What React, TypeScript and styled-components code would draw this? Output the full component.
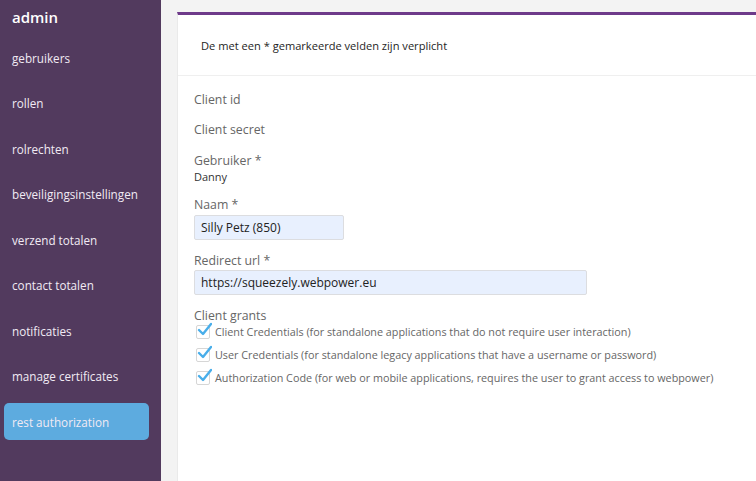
import styled, { createGlobalStyle } from "styled-components";

const GlobalStyle = createGlobalStyle`
  html, body {
    margin: 0;
    padding: 0;
    height: 100%;
    background: #f3f3f3;
    font-family: "Open Sans", "Liberation Sans", sans-serif;
  }
`;

const Layout = styled.div`
  display: flex;
  height: 481px;
  overflow: hidden;
`;

const Sidebar = styled.nav`
  width: 161px;
  flex-shrink: 0;
  background-color: #523a5e;
  display: flex;
  flex-direction: column;
`;

const Brand = styled.div`
  color: #ffffff;
  font-size: 15px;
  font-weight: 600;
  padding: 6px 12px 0;
  height: 33px;
  line-height: 22px;
`;

const NavItem = styled.a<{ $active?: boolean }>`
  display: flex;
  align-items: center;
  margin: 0 12px 0 4px;
  padding: 0 8px;
  height: 37px;
  margin-bottom: 8.5px;
  border-radius: 5px;
  font-size: 11.7px;
  color: #f1eaf4;
  text-decoration: none;
  background: ${(p) => (p.$active ? "#5dabdf" : "transparent")};
`;

const Main = styled.main`
  flex: 1;
  padding: 12px 0 0 16px;
`;

const Card = styled.section`
  background: #ffffff;
  border-top: 3px solid #6e3a8a;
  border-left: 1px solid #eaeaea;
  height: 100%;
`;

const CardHeader = styled.div`
  height: 60px;
  border-bottom: 1px solid #efefef;
  display: flex;
  align-items: center;
  padding: 0 23px;
  font-size: 11.1px;
  color: #1e1e1e;
`;

const Form = styled.div`
  padding: 15px 16px;
  display: flex;
  flex-direction: column;
`;

const Label = styled.div<{ $gap?: number }>`
  font-size: 12.3px;
  color: #666666;
  line-height: 18px;
  margin-bottom: ${(p) => p.$gap ?? 12}px;
`;

const Value = styled.div`
  font-size: 11px;
  color: #333333;
  line-height: 14px;
  margin-bottom: 12px;
`;

const Input = styled.input<{ $w: number }>`
  width: ${(p) => p.$w}px;
  height: 25px;
  box-sizing: border-box;
  border: 1px solid #dcdde0;
  border-radius: 2px;
  background: #e8f0fe;
  padding: 0 6px;
  font-family: "Open Sans", "Liberation Sans", sans-serif;
  font-size: 12px;
  color: #222;
  margin-bottom: 12px;
  outline: none;
`;

const GrantRow = styled.label`
  display: flex;
  align-items: center;
  gap: 5px;
  height: 23px;
  font-size: 10.8px;
  color: #666666;
`;

const Box = styled.span`
  position: relative;
  width: 12px;
  height: 12px;
  border: 1px solid #d6d6d6;
  border-radius: 2px;
  background: #fff;
  margin-left: 2px;
  flex-shrink: 0;

  svg {
    position: absolute;
    left: 0;
    top: -4px;
  }
`;

const Check = () => (
  <Box>
    <svg width="15" height="15" viewBox="0 0 15 15">
      <path d="M2 8 L6 12 L14 2" fill="none" stroke="#49aeea" strokeWidth="2.4" strokeLinecap="round" strokeLinejoin="round" />
    </svg>
  </Box>
);

const navItems = [
  "gebruikers",
  "rollen",
  "rolrechten",
  "beveiligingsinstellingen",
  "verzend totalen",
  "contact totalen",
  "notificaties",
  "manage certificates",
  "rest authorization",
];

const grants = [
  "Client Credentials (for standalone applications that do not require user interaction)",
  "User Credentials (for standalone legacy applications that have a username or password)",
  "Authorization Code (for web or mobile applications, requires the user to grant access to webpower)",
];

const App = () => {
  return (
    <>
      <GlobalStyle />
      <Layout>
        <Sidebar>
          <Brand>admin</Brand>
          {navItems.map((item) => (
            <NavItem key={item} $active={item === "rest authorization"}>
              {item}
            </NavItem>
          ))}
        </Sidebar>
        <Main>
          <Card>
            <CardHeader>De met een * gemarkeerde velden zijn verplicht</CardHeader>
            <Form>
              <Label>Client id</Label>
              <Label $gap={13}>Client secret</Label>
              <Label $gap={0}>Gebruiker *</Label>
              <Value>Danny</Value>
              <Label $gap={1}>Naam *</Label>
              <Input $w={150} defaultValue="Silly Petz (850)" />
              <Label $gap={0}>Redirect url *</Label>
              <Input $w={393} defaultValue="https://squeezely.webpower.eu" />
              <Label $gap={-5}>Client grants</Label>
              {grants.map((g) => (
                <GrantRow key={g}>
                  <Check />
                  {g}
                </GrantRow>
              ))}
            </Form>
          </Card>
        </Main>
      </Layout>
    </>
  );
};

export default App;
